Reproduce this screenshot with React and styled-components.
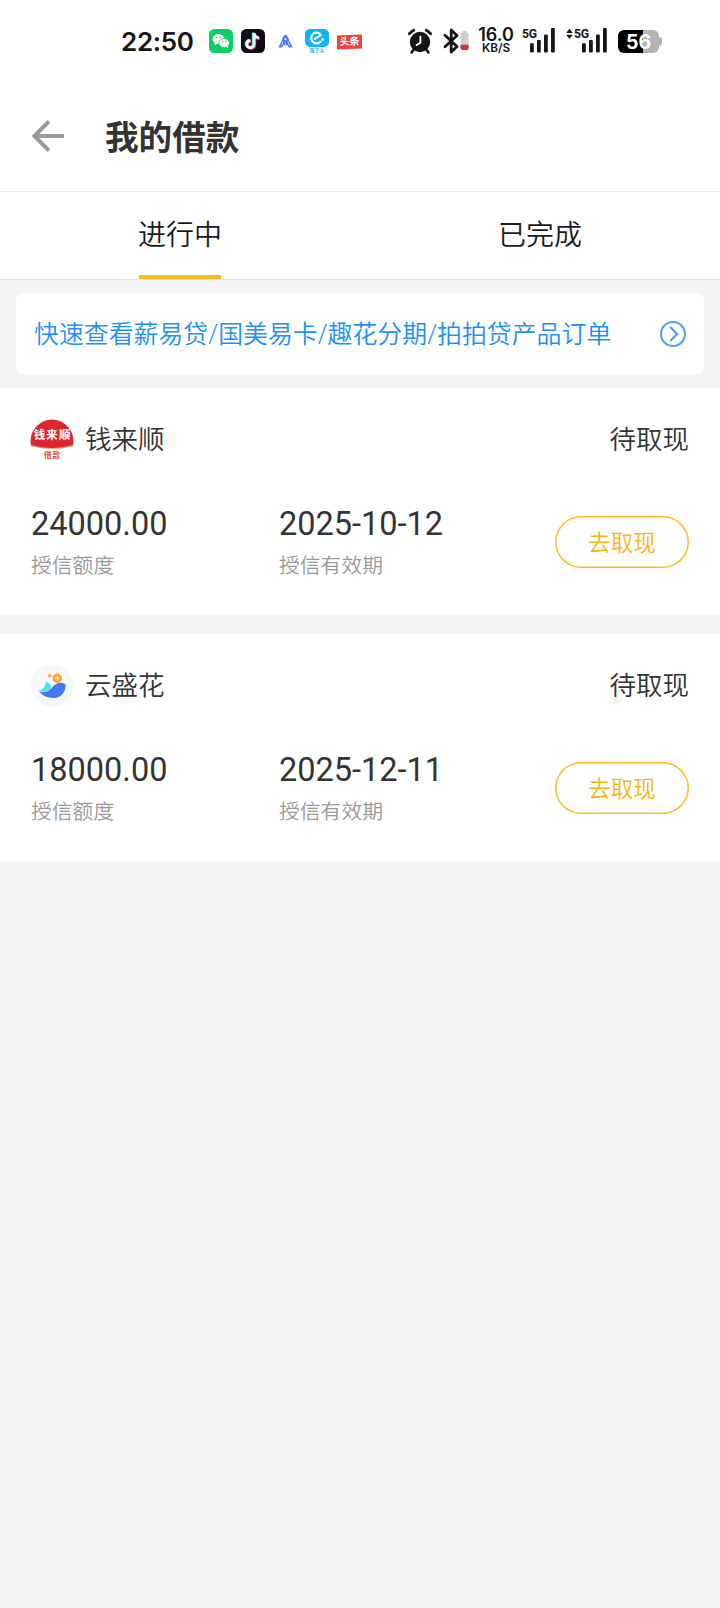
import React from 'react';
import styled, { createGlobalStyle } from 'styled-components';

const prestamos = [
    { id: 1, nombre: '钱来顺', logo: 'qian', estado: '待取现', monto: '24000.00', fecha: '2025-10-12' },
    { id: 2, nombre: '云盛花', logo: 'yun', estado: '待取现', monto: '18000.00', fecha: '2025-12-11' },
];

const WeChat = () => (
    <svg width="24" height="24" viewBox="0 0 24 24">
        <rect width="24" height="24" rx="5.5" fill="#07d160"/>
        <ellipse cx="9.5" cy="10" rx="6" ry="5.1" fill="#fff"/>
        <path d="M6 13.5 5.3 16.6 9 14.6z" fill="#fff"/>
        <ellipse cx="15.2" cy="14" rx="5.2" ry="4.5" fill="#fff" stroke="#07d160" strokeWidth=".8"/>
        <path d="M17 17.4 18.9 19.2 18.7 16.6z" fill="#fff"/>
        <circle cx="7.5" cy="8.6" r=".8" fill="#07d160"/>
        <circle cx="11.4" cy="8.6" r=".8" fill="#07d160"/>
        <circle cx="13.5" cy="12.8" r=".7" fill="#07d160"/>
        <circle cx="16.9" cy="12.8" r=".7" fill="#07d160"/>
    </svg>
);

const nota = "M13 4v11.2a3.6 3.6 0 1 1-3.6-3.6M13 4.4c.4 2.8 2.2 4.3 5 4.5";

const Douyin = () => (
    <svg width="24" height="24" viewBox="0 0 24 24">
        <rect width="24" height="24" rx="5.5" fill="#120a18"/>
        <g fill="none" strokeWidth="2.8">
            <path d={nota} stroke="#25e5e5" transform="translate(-.8 -.5)"/>
            <path d={nota} stroke="#fb2a58" transform="translate(.8 .7)"/>
            <path d={nota} stroke="#fff"/>
        </g>
    </svg>
);

const Cohete = () => (
    <svg width="15" height="15" viewBox="0 0 16 15">
        <path d="M8 0C5.4 1.6 4.6 4.4 4.3 6L.4 14h4.2l1.3-2.5h4.2l1.3 2.5h4.2L11.7 6C11.4 4.4 10.6 1.6 8 0z" fill="#5378e8"/>
        <circle cx="8" cy="5" r="1.2" fill="#dfe7ff"/>
        <path d="M5.2 7.5 4 12M10.8 7.5l1.2 4.5M8 9.5V14" stroke="#dfe7ff" strokeWidth=".8"/>
    </svg>
);

const Eleme = () => (
    <svg width="24" height="18" viewBox="0 0 24 18">
        <rect width="24" height="18" rx="5" fill="#0db5f5"/>
        <path d="M15.4 12.8a5.4 5.4 0 1 1 .8-6.6L9.8 9.9" fill="none" stroke="#fff" strokeWidth="2.1" strokeLinecap="round" strokeLinejoin="round"/>
        <circle cx="17.6" cy="10.4" r="1.3" fill="#fff"/>
    </svg>
);

const Alarma = () => (
    <svg width="26" height="26" viewBox="0 0 26 26">
        <circle cx="13" cy="14" r="10.2" fill="#161616"/>
        <path d="M2.2 5.8a14 14 0 0 1 4.6-3.6M23.8 5.8a14 14 0 0 0-4.6-3.6" stroke="#161616" strokeWidth="2.8" strokeLinecap="round" fill="none"/>
        <path d="M6.6 21.8 4.6 24.4M19.4 21.8l2 2.6" stroke="#161616" strokeWidth="2.6" strokeLinecap="round"/>
        <path d="M13.4 8.6v6.2L9.6 17" fill="none" stroke="#fff" strokeWidth="1.9" strokeLinecap="round"/>
    </svg>
);

const Bluetooth = () => (
    <svg width="26" height="26" viewBox="0 0 26 26">
        <path d="M2 7.2 14 18.6 8.2 24V2L14 7.4 2 18.8" fill="none" stroke="#161616" strokeWidth="2.8" strokeLinejoin="round" strokeLinecap="round"/>
        <rect x="19.6" y="3" width="4" height="3" rx="1" fill="#cfcfcf"/>
        <rect x="17.6" y="4.4" width="8" height="17.6" rx="2" fill="#cfcfcf"/>
        <path d="M17.6 16.8h8V20a2 2 0 0 1-2 2h-4a2 2 0 0 1-2-2z" fill="#d0342f"/>
    </svg>
);

const Barras = () => (
    <svg width="25" height="25" viewBox="0 0 25 25">
        <rect x="0" y="15.2" width="3.8" height="9.4" rx="1" fill="#161616"/>
        <rect x="7" y="12" width="3.8" height="12.6" rx="1" fill="#161616"/>
        <rect x="14" y="6.4" width="3.8" height="18.2" rx="1" fill="#161616"/>
        <rect x="21" y="0" width="3.8" height="24.6" rx="1" fill="#161616"/>
    </svg>
);

const Triangulos = () => (
    <svg width="7" height="12" viewBox="0 0 7 12">
        <path d="M3.5.8 6.8 5H.2zM3.5 11 .2 6.8h6.6z" fill="#161616"/>
    </svg>
);

const FlechaAtras = () => (
    <svg width="34" height="34" viewBox="0 0 34 34">
        <path d="M18 2.4 3.4 17 18 31.6M3.4 17H33" fill="none" stroke="#999" strokeWidth="4"/>
    </svg>
);

const FlechaCirculo = () => (
    <svg width="26" height="26" viewBox="0 0 26 26">
        <circle cx="13" cy="13" r="12" fill="none" stroke="#4a9fec" strokeWidth="2"/>
        <path d="M10.2 6 17.2 13l-7 7" fill="none" stroke="#4a9fec" strokeWidth="2.2"/>
    </svg>
);

const LogoQian = () => (
    <svg width="44" height="44" viewBox="0 0 44 44">
        <path d="M1.2 29A21.4 21.4 0 1 1 42.8 29Q22 34.5 1.2 29z" fill="#dd2530"/>
        <path d="M1.2 28.6Q22 34.6 42.8 28.6" fill="none" stroke="#f3b38c" strokeWidth=".9"/>
        <text x="22.6" y="22.3" textAnchor="middle" fontSize="11.4" fontWeight="700" letterSpacing="1.2" fill="#fff">钱来顺</text>
        <text x="22.5" y="41.4" textAnchor="middle" fontSize="7.6" fontWeight="700" letterSpacing="1" fill="#d8434a">借款</text>
    </svg>
);

const LogoYun = () => (
    <svg width="44" height="44" viewBox="0 0 44 44">
        <circle cx="22" cy="22.5" r="21" fill="#f6f7f8"/>
        <path d="M9.5 28.8c5.5 1.2 9.5-.8 12.5-4.4 3.5-4.2 9.5-6.2 13.5-3 .8 7.5-4.5 13.6-12 13.6-6.5 0-11-2.4-14-6.2z" fill="#4277f3"/>
        <path d="M8 28.4c4.5-1.4 7.2-4.6 8.4-9.6 3.6 1.4 5.4 3.4 4.8 5.6-2 3.4-7.5 5.4-13.2 4z" fill="#42e3ec"/>
        <circle cx="27.3" cy="15.2" r="4.7" fill="#f7a52c"/>
        <path d="M27.3 13v4.4M25.1 15.2h4.4" stroke="#ffe0a6" strokeWidth="1.2"/>
        <rect x="17.8" y="11.2" width="3.8" height="3.4" rx=".8" fill="#f7b060"/>
    </svg>
);

const App = () => {
    return(
        <>
            <EstiloGlobal />
            <Pantalla>
                <BarraEstado>
                    <Hora>22:50</Hora>
                    <Notificaciones>
                        <WeChat />
                        <Douyin />
                        <Caja $izq={13} $arriba={5}><Cohete /></Caja>
                        <Caja $izq={12}>
                            <Eleme />
                            <Mini>饿了么</Mini>
                        </Caja>
                        <Toutiao>头条</Toutiao>
                    </Notificaciones>
                    <Sistema>
                        <Alarma />
                        <Caja $izq={10}><Bluetooth /></Caja>
                        <Velocidad>
                            <b>16.0</b>
                            <span>KB/S</span>
                        </Velocidad>
                        <Senal $izq={6}>
                            <Red>5G</Red>
                            <Barras />
                        </Senal>
                        <Senal $izq={11}>
                            <Triangulos />
                            <Red>5G</Red>
                            <Barras />
                        </Senal>
                        <Bateria>
                            <Carga>56</Carga>
                        </Bateria>
                    </Sistema>
                </BarraEstado>

                <Encabezado>
                    <FlechaAtras />
                    <h1>我的借款</h1>
                </Encabezado>

                <Pestanas>
                    <Pestana $activa>进行中</Pestana>
                    <Pestana>已完成</Pestana>
                </Pestanas>

                <Aviso>
                    <span>快速查看薪易贷/国美易卡/趣花分期/拍拍贷产品订单</span>
                    <FlechaCirculo />
                </Aviso>

                <Lista>
                    {prestamos.map((p) => (
                        <Tarjeta key={p.id}>
                            <Cabecera>
                                {p.logo === 'qian' ? <LogoQian /> : <LogoYun />}
                                <Nombre>{p.nombre}</Nombre>
                                <Estado>{p.estado}</Estado>
                            </Cabecera>
                            <Detalle>
                                <Dato $ancho={248}>
                                    <strong>{p.monto}</strong>
                                    <small>授信额度</small>
                                </Dato>
                                <Dato $ancho={276}>
                                    <strong>{p.fecha}</strong>
                                    <small>授信有效期</small>
                                </Dato>
                                <Boton>去取现</Boton>
                            </Detalle>
                        </Tarjeta>
                    ))}
                </Lista>
            </Pantalla>
        </>
    )
}

export default App;

const EstiloGlobal = createGlobalStyle`
    * {
        box-sizing: border-box;
    }

    body{
        margin: 0;
        background: #f5f5f5;
        font-family: Roboto, "Noto Sans CJK SC", sans-serif;
    }

    svg{
        display: block;
        flex: none;
    }
`;

const Pantalla = styled.div`
    width: 720px;
    min-height: 1608px;
    background: #f5f5f5;
    color: #333;
`;

const BarraEstado = styled.div`
    height: 82px;
    padding: 28px 0 0 121px;
    background: #fff;
    display: flex;
    align-items: flex-start;
    font-family: Inter, "Noto Sans CJK SC", sans-serif;
    color: #161616;
`;

const Hora = styled.div`
    width: 88px;
    font-size: 26px;
    line-height: 27px;
    font-weight: 600;
    letter-spacing: -.3px;
`;

const Notificaciones = styled.div`
    width: 198px;
    padding-top: 1px;
    display: flex;
    align-items: flex-start;

    > svg + svg{
        margin-left: 8px;
    }
`;

const Caja = styled.div`
    margin: ${({ $arriba = 0 }) => $arriba}px 0 0 ${({ $izq = 0 }) => $izq}px;
`;

const Mini = styled.div`
    height: 6px;
    font-size: 5px;
    line-height: 7px;
    font-weight: 700;
    text-align: center;
    color: #35b4e6;
`;

const Toutiao = styled.div`
    width: 25px;
    height: 14px;
    margin: 6px 0 0 8px;
    background: #f0403f;
    color: #fff;
    font-size: 10px;
    line-height: 13px;
    font-weight: 700;
    text-align: center;
    transform: skewY(-2deg);
`;

const Sistema = styled.div`
    display: flex;
    align-items: flex-start;
`;

const Velocidad = styled.div`
    width: 38px;
    margin-left: 8px;
    display: flex;
    flex-direction: column;
    align-items: center;

    b{
        font-size: 18px;
        line-height: 14px;
        font-weight: 600;
    }

    span{
        margin-top: 1px;
        font-size: 11.8px;
        line-height: 10px;
        font-weight: 600;
    }
`;

const Senal = styled.div`
    display: flex;
    align-items: flex-start;
    margin-left: ${({ $izq }) => $izq}px;
`;

const Red = styled.span`
    width: 16px;
    margin: 0 -8px 0 1px;
    font-family: Roboto, sans-serif;
    font-size: 13px;
    line-height: 12px;
    font-weight: 700;
    letter-spacing: -.3px;
    transform: scaleX(.94);
    transform-origin: left;
`;

const Bateria = styled.div`
    display: flex;
    align-items: center;
    margin: 2px 0 0 11px;

    &::after{
        content: "";
        width: 3px;
        height: 9px;
        border-radius: 0 3px 3px 0;
        background: #b4b4b4;
    }
`;

const Carga = styled.div`
    width: 41px;
    height: 23px;
    border-radius: 6px;
    background: linear-gradient(90deg, #000 61%, #b4b4b4 61%);
    color: #fff;
    font-size: 19.5px;
    line-height: 24px;
    font-weight: 700;
    text-align: center;
`;

const Encabezado = styled.div`
    height: 110px;
    padding: 0 31px 2px;
    background: #fff;
    border-bottom: 1px solid #ececec;
    display: flex;
    align-items: center;

    h1{
        margin: 0 0 0 40px;
        padding-top: 7px;
        font-size: 33.6px;
        line-height: 48px;
        font-weight: 700;
    }
`;

const Pestanas = styled.div`
    height: 88px;
    background: #fff;
    border-bottom: 1px solid #e2e2e2;
    display: flex;
    justify-content: space-around;
`;

const Pestana = styled.div`
    font-size: 28px;
    line-height: 82px;
    padding-top: 3px;
    color: #1a1a1a;
    font-weight: 350;

    &::after{
        content: "";
        display: block;
        width: 82px;
        height: 4px;
        margin: -2px auto 0;
        background: ${({ $activa }) => ($activa ? '#f9bc15' : 'transparent')};
    }
`;

const Aviso = styled.div`
    height: 82px;
    margin: 13px 16px;
    padding: 0 18px 0 19px;
    border-radius: 8px;
    background: #fff;
    display: flex;
    align-items: center;
    justify-content: space-between;
    font-size: 24.9px;
    font-weight: 350;
    color: #1e90f5;

    span{
        margin-left: -1px;
        padding-bottom: 4px;
    }
`;

const Lista = styled.div`
    display: flex;
    flex-direction: column;
    gap: 19px;
`;

const Tarjeta = styled.div`
    height: 227px;
    padding: 29px 31px 0 30px;
    background: #fff;
`;

const Cabecera = styled.div`
    height: 44px;
    display: flex;
    align-items: center;
`;

const Nombre = styled.div`
    margin-left: 11px;
    padding-bottom: 4px;
    font-size: 26.5px;
    font-weight: 350;
`;

const Estado = styled(Nombre)`
    margin-left: auto;
`;

const Detalle = styled.div`
    display: flex;
    margin-top: 44px;
    padding-left: 1px;
`;

const Dato = styled.div`
    width: ${({ $ancho }) => $ancho}px;

    strong{
        display: block;
        font-size: 32.5px;
        line-height: 38px;
        font-weight: 400;
    }

    small{
        display: block;
        margin-top: 8px;
        font-size: 20.8px;
        line-height: 30px;
        font-weight: 350;
        color: #999;
    }
`;

const Boton = styled.button`
    width: 134px;
    height: 52px;
    margin-top: 11px;
    padding: 0 0 1px;
    border: none;
    border-radius: 26px;
    box-shadow: inset 0 0 0 1.5px #f9bc25;
    background: none;
    font-family: inherit;
    font-size: 22.6px;
    font-weight: 350;
    color: #f5b612;
`;
